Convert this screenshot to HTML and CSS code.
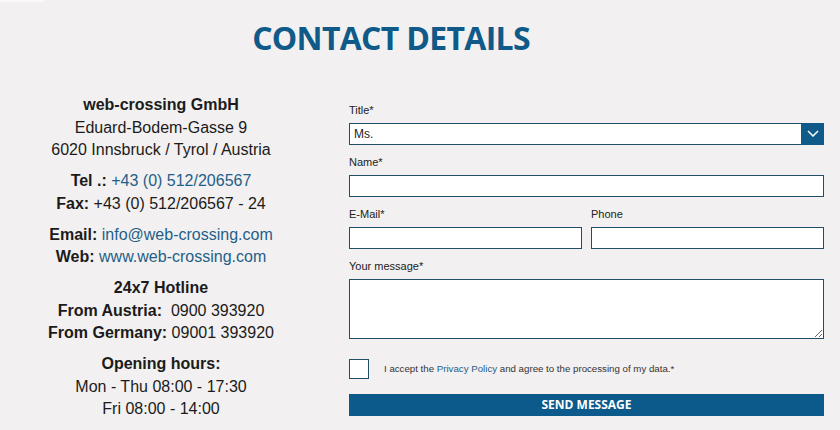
FILE: index.html
```html
<!DOCTYPE html>
<html>

<head>
	<title>Contact details</title>
	<link rel="stylesheet" href="styles.css">
</head>

<body>
	<div class="topbar"></div>
	<h1 class="page-title">CONTACT DETAILS</h1>

	<div class="contact">
		<!-- Адрес и телефоны -->
		<div class="info">
			<p><b>web-crossing GmbH</b><br>Eduard-Bodem-Gasse 9<br>6020 Innsbruck / Tyrol / Austria</p>
			<p><b>Tel .:</b> <a href="#">+43 (0) 512/206567</a><br><b>Fax:</b> +43 (0) 512/206567 - 24</p>
			<p><b>Email:</b> <a href="#">info@web-crossing.com</a><br><b>Web:</b> <a href="#">www.web-crossing.com</a></p>
			<p><b>24x7 Hotline</b><br><b>From Austria:</b>&nbsp; 0900 393920<br><b>From Germany:</b> 09001 393920</p>
			<p><b>Opening hours:</b><br>Mon - Thu 08:00 - 17:30<br>Fri 08:00 - 14:00</p>
		</div>

		<!-- Форма -->
		<form class="form">
			<div class="field">
				<label>Title*</label>
				<div class="select">
					<select>
						<option>Ms.</option>
						<option>Mr.</option>
					</select>
					<span class="select-arrow">
						<svg width="12" height="7" viewBox="0 0 12 7">
							<path d="M1 1 L6 6 L11 1" fill="none" stroke="#fff" stroke-width="1.5" />
						</svg>
					</span>
				</div>
			</div>
			<div class="field">
				<label>Name*</label>
				<input type="text">
			</div>
			<div class="field-row">
				<div class="field">
					<label>E-Mail*</label>
					<input type="text">
				</div>
				<div class="field">
					<label>Phone</label>
					<input type="text">
				</div>
			</div>
			<div class="field">
				<label>Your message*</label>
				<textarea></textarea>
			</div>
			<div class="accept">
				<span class="checkbox"></span>
				<span class="accept-text">I accept the <a href="#">Privacy Policy</a> and agree to the processing of my data.*</span>
			</div>
			<button type="button" class="send">SEND MESSAGE</button>
		</form>
	</div>
</body>

</html>
```

FILE: styles.css
```css
body {
	margin: 0;
	background-color: #f2f0f0;
	font-family: "Liberation Sans", Arial, sans-serif;
	color: #1b1b1b;
}

a {
	color: #1f5f88;
	text-decoration: none;
}

.topbar {
	width: 44px;
	height: 2px;
	background-color: #fbfafa;
}

/* заголовок страницы */
.page-title {
	width: 782px;
	margin: 17px 0 0;
	font-family: "Open Sans", sans-serif;
	font-weight: 700;
	font-size: 32px;
	line-height: 38px;
	letter-spacing: -0.7px;
	text-align: center;
	color: #0f5a89;
}

.contact {
	display: grid;
	grid-template-columns: 322px 475px;
	column-gap: 27px;
	margin-top: 37px;
}

.info {
	text-align: center;
	font-size: 16px;
	line-height: 22.7px;
}

.info p {
	margin: 0 0 8px;
}

.form {
	padding-top: 9.5px;
}

.field {
	margin-bottom: 11px;
}

.field label {
	display: block;
	font-size: 11px;
	line-height: 13px;
	margin-bottom: 6px;
	color: #222;
}

.field-row {
	display: grid;
	grid-template-columns: 1fr 1fr;
	column-gap: 9px;
}

.field input,
.field textarea {
	display: block;
	width: 100%;
	height: 22px;
	box-sizing: border-box;
	border: 1px solid #1f4e66;
	background-color: #fff;
	margin: 0;
	font-family: inherit;
}

.field textarea {
	height: 60px;
	resize: vertical;
}

/* выпадающий список */
.select {
	display: flex;
	height: 22px;
	box-sizing: border-box;
	border: 1px solid #1f4e66;
	background-color: #fff;
}

.select select {
	flex: 1;
	appearance: none;
	border: none;
	background: transparent;
	padding: 0 4px;
	font-family: "Liberation Sans", Arial, sans-serif;
	font-size: 12px;
	color: #222;
	outline: none;
}

.select-arrow {
	display: flex;
	align-items: center;
	justify-content: center;
	width: 23px;
	margin: -1px -1px -1px 0;
	background-color: #0f5a89;
}

.accept {
	display: flex;
	align-items: center;
	margin-top: 20px;
}

.checkbox {
	width: 20px;
	height: 20px;
	box-sizing: border-box;
	border: 1px solid #1f4e66;
	background-color: #fff;
}

.accept-text {
	margin-left: 15px;
	font-size: 9.7px;
	color: #333;
}

.send {
	display: block;
	width: 100%;
	height: 22px;
	margin-top: 15px;
	border: none;
	background-color: #0c5a8c;
	color: #fff;
	font-family: "Open Sans", sans-serif;
	font-weight: 700;
	font-size: 12px;
	cursor: pointer;
}
```
